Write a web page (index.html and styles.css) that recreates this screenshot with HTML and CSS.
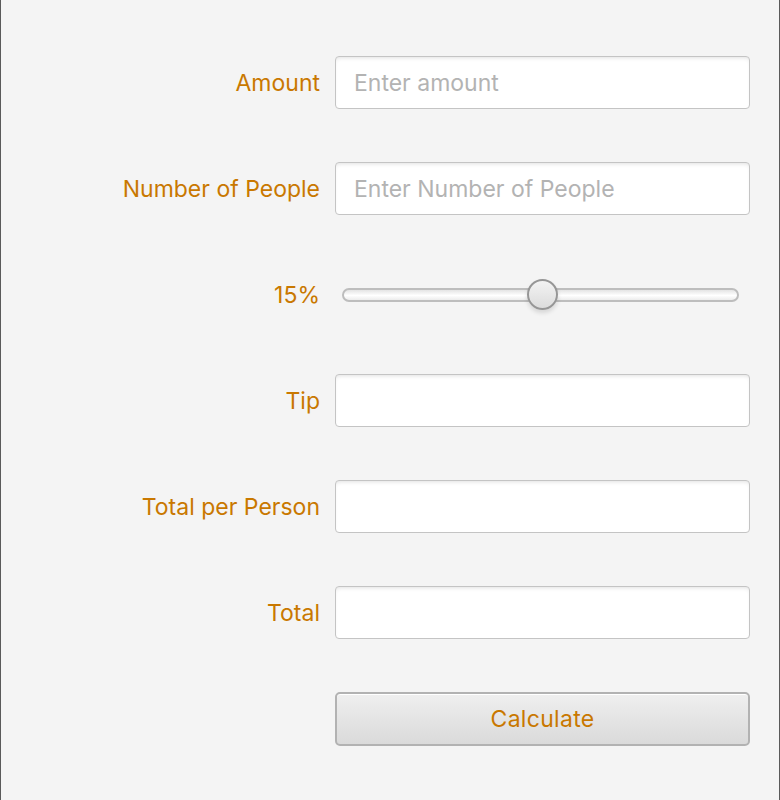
FILE: index.html
```html
<!DOCTYPE html>
<html>
<head>
<meta charset="utf-8">
<link rel="stylesheet" href="styles.css">
</head>
<body>
<div class="window">
  <form class="form">
    <label class="label">Amount</label>
    <input class="field" type="text" placeholder="Enter amount">

    <label class="label">Number of People</label>
    <input class="field" type="text" placeholder="Enter Number of People">

    <label class="label">15%</label>
    <div class="slider">
      <div class="track"></div>
      <div class="thumb"></div>
    </div>

    <label class="label">Tip</label>
    <input class="field" type="text">

    <label class="label">Total per Person</label>
    <input class="field" type="text">

    <label class="label">Total</label>
    <input class="field" type="text">

    <span></span>
    <button class="button" type="button">Calculate</button>
  </form>
</div>
</body>
</html>
```
FILE: styles.css
```css
html, body {
  margin: 0;
  padding: 0;
  height: 100%;
}
body {
  background: #f4f4f4;
  font-family: Inter, "Noto Sans", sans-serif;
}
.window {
  box-sizing: border-box;
  height: 800px;
  width: 780px;
  border-left: 1px solid #5a5a5a;
  border-right: 1px solid #5a5a5a;
  padding: 56px 29px 0 0;
}
.form {
  display: grid;
  grid-template-columns: 319px 415px;
  column-gap: 15px;
  row-gap: 53px;
  align-items: center;
}
.label {
  justify-self: end;
  color: #c97800;
  font-size: 23px;
  letter-spacing: 0;
}
.field {
  box-sizing: border-box;
  height: 53px;
  width: 415px;
  margin: 0;
  border: 1.5px solid #c4c4c4;
  border-radius: 4px;
  background: #ffffff;
  box-shadow: inset 0 3px 4px -2px rgba(0,0,0,0.12);
  padding: 0 17px 0 18px;
  font-family: inherit;
  font-size: 23px;
  color: #333;
  outline: none;
}
.field::placeholder {
  color: #b3b3b3;
}
.slider {
  position: relative;
  height: 53px;
}
.track {
  position: absolute;
  left: 7px;
  right: 11px;
  top: 20px;
  height: 14px;
  box-sizing: border-box;
  border: 2px solid #bdbdbd;
  border-radius: 7px;
  background: linear-gradient(#e4e4e4, #ffffff 55%, #ececec);
}
.thumb {
  position: absolute;
  left: 192px;
  top: 11px;
  width: 31px;
  height: 31px;
  box-sizing: border-box;
  border: 2px solid #969696;
  border-radius: 50%;
  background: linear-gradient(#f3f3f3, #dcdcdc);
  box-shadow: 0 3px 4px rgba(0,0,0,0.12);
}
.button {
  box-sizing: border-box;
  height: 54px;
  width: 415px;
  margin: 0;
  border: 2px solid #b2b2b2;
  border-radius: 5px;
  background: linear-gradient(#efefef, #dadada);
  box-shadow: inset 0 1px 0 #ffffff;
  color: #c97800;
  font-family: inherit;
  font-size: 23px;
  letter-spacing: 0.3px;
}
```
